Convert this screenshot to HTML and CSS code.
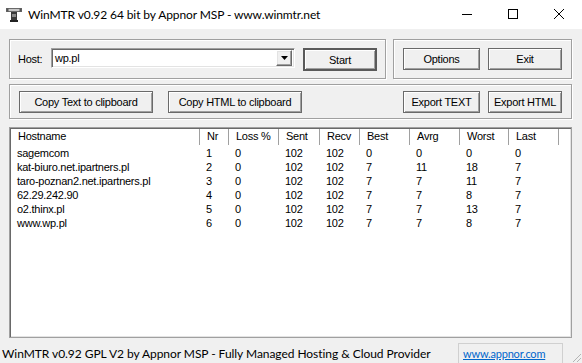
FILE: index.html
```html
<!DOCTYPE html>
<html lang="en">
<head>
    <meta charset="UTF-8">
    <title>WinMTR v0.92 64 bit by Appnor MSP - www.winmtr.net</title>
    <link rel="stylesheet" href="styles.css">
</head>
<body>
    <div class="titlebar">
        <svg class="app-icon" width="16" height="16" viewBox="0 0 16 16">
            <rect x="0.5" y="1.5" width="15" height="3" fill="#c8c8c8" stroke="#6a6a6a"/>
            <rect x="0.5" y="1.5" width="2" height="3" fill="#555"/>
            <rect x="13.5" y="1.5" width="2" height="3" fill="#555"/>
            <rect x="5" y="5" width="6" height="10" fill="#3a3a3a"/>
            <rect x="6" y="7" width="4" height="3" fill="#8a8a8a"/>
            <rect x="4" y="13" width="8" height="2" fill="#222"/>
        </svg>
        <span class="title">WinMTR v0.92 64 bit by Appnor MSP - www.winmtr.net</span>
        <div class="controls">
            <div class="ctrl">
                <svg width="12" height="12" viewBox="0 0 12 12"><line x1="1" y1="6.5" x2="11" y2="6.5" stroke="#000" stroke-width="1"/></svg>
            </div>
            <div class="ctrl">
                <svg width="12" height="12" viewBox="0 0 12 12"><rect x="1.5" y="1.5" width="9" height="9" fill="none" stroke="#000" stroke-width="1"/></svg>
            </div>
            <div class="ctrl">
                <svg width="12" height="12" viewBox="0 0 12 12"><path d="M1 1 L11 11 M11 1 L1 11" stroke="#000" stroke-width="1"/></svg>
            </div>
        </div>
    </div>

    <div class="client">
        <div class="top-row">
            <div class="group host-group">
                <label class="host-label">Host:</label>
                <div class="combo">
                    <span class="combo-value">wp.pl</span>
                    <span class="combo-btn">
                        <svg width="7" height="4" viewBox="0 0 7 4"><path d="M0 0 H7 L3.5 4 Z" fill="#000"/></svg>
                    </span>
                </div>
                <button class="btn btn-default btn-start">Start</button>
            </div>
            <div class="group action-group">
                <button class="btn btn-options">Options</button>
                <button class="btn btn-exit">Exit</button>
            </div>
        </div>

        <div class="group copy-group">
            <button class="btn btn-copy">Copy Text to clipboard</button>
            <button class="btn btn-copy">Copy HTML to clipboard</button>
            <button class="btn btn-options btn-export-text">Export TEXT</button>
            <button class="btn btn-exit">Export HTML</button>
        </div>

        <div class="listview">
            <div class="lv-row lv-header">
                <div>Hostname</div><div>Nr</div><div>Loss %</div><div>Sent</div><div>Recv</div>
                <div>Best</div><div>Avrg</div><div>Worst</div><div>Last</div><div></div>
            </div>
            <div class="lv-body" id="hops"></div>
        </div>
    </div>

    <div class="statusbar">
        <div class="status-text">WinMTR v0.92 GPL V2 by Appnor MSP - Fully Managed Hosting &amp; Cloud Provider</div>
        <div class="status-panel"><a class="status-link" href="#">www.appnor.com</a></div>
        <svg class="grip" width="12" height="12" viewBox="0 0 12 12">
            <path d="M11 3 L3 11 M11 7 L7 11 M11 11 L11 11" stroke="#b4b4b4" stroke-width="1"/>
        </svg>
    </div>

    <script>
        // hop rows: host, nr, loss, sent, recv, best, avrg, worst, last
        const hops = [
            ['sagemcom', 1, 0, 102, 102, 0, 0, 0, 0],
            ['kat-biuro.net.ipartners.pl', 2, 0, 102, 102, 7, 11, 18, 7],
            ['taro-poznan2.net.ipartners.pl', 3, 0, 102, 102, 7, 7, 11, 7],
            ['62.29.242.90', 4, 0, 102, 102, 7, 7, 8, 7],
            ['o2.thinx.pl', 5, 0, 102, 102, 7, 7, 13, 7],
            ['www.wp.pl', 6, 0, 102, 102, 7, 7, 8, 7]
        ];

        const body = document.getElementById('hops');
        hops.forEach(hop => {
            const row = document.createElement('div');
            row.className = 'lv-row';
            hop.forEach(value => {
                const cell = document.createElement('div');
                cell.textContent = value;
                row.appendChild(cell);
            });
            row.appendChild(document.createElement('div'));
            body.appendChild(row);
        });
    </script>
</body>
</html>
```

FILE: styles.css
```css
* {
    margin: 0;
    padding: 0;
    box-sizing: border-box;
}

body {
    width: 582px;
    height: 363px;
    overflow: hidden;
    background: #f0f0f0;
    font-family: "Liberation Sans", Arial, sans-serif;
    font-size: 11px;
    letter-spacing: -0.25px;
    color: #000;
}

/* title bar */
.titlebar {
    height: 29px;
    background: #fff;
    display: flex;
    align-items: center;
}

.app-icon {
    margin-left: 6px;
    margin-top: 1px;
}

.title {
    margin-left: 6px;
    font-family: Lato, "Open Sans", sans-serif;
    font-size: 12px;
    letter-spacing: -0.1px;
}

.controls {
    margin-left: auto;
    display: flex;
    align-self: flex-start;
}

.ctrl {
    width: 46px;
    height: 27px;
    display: flex;
    align-items: center;
    justify-content: center;
}

/* client area */
.client {
    padding: 10px 9px 0 9px;
}

.top-row {
    display: flex;
    gap: 7px;
}

.group {
    border: 1px solid #a0a0a0;
    box-shadow: inset 1px 1px 0 #fff, 1px 1px 0 #fff;
    display: flex;
    align-items: flex-start;
}

.host-group {
    width: 377px;
    height: 40px;
    padding: 8px 0 0 8px;
}

.host-label {
    width: 33px;
    line-height: 20px;
    padding-top: 1px;
}

.combo {
    width: 244px;
    height: 20px;
    background: #fff;
    border: 1px solid;
    border-color: #a0a0a0 #fff #fff #a0a0a0;
    box-shadow: inset 1px 1px 0 #696969, inset -1px -1px 0 #e3e3e3;
    display: flex;
    align-items: center;
    padding: 0 2px 0 3px;
}

.combo-value {
    flex: 1;
}

.combo-btn {
    width: 16px;
    height: 16px;
    background: #f0f0f0;
    border: 1px solid;
    border-color: #fff #696969 #696969 #fff;
    box-shadow: inset -1px -1px 0 #a0a0a0, inset 1px 1px 0 #e3e3e3;
    display: flex;
    align-items: center;
    justify-content: center;
}

.btn {
    height: 22px;
    background: #f0f0f0;
    border: 1px solid #6a6a6a;
    box-shadow: inset 1px 1px 0 #fff, inset -1px -1px 0 #a0a0a0;
    font-family: inherit;
    font-size: 11px;
    letter-spacing: -0.25px;
    color: #000;
    padding: 0;
}

.btn-default {
    border: 2px solid #5a5a5a;
    box-shadow: inset 1px 1px 0 #fff, inset -1px -1px 0 #a0a0a0;
}

.btn-start {
    width: 74px;
    height: 23px;
    margin-left: 8px;
}

.action-group {
    width: 179px;
    height: 40px;
    padding: 8px 0 0 9px;
    gap: 8px;
}

.btn-options {
    width: 77px;
}

.btn-exit {
    width: 74px;
}

.copy-group {
    margin-top: 5px;
    width: 563px;
    height: 35px;
    padding: 6px 9px 0 9px;
    gap: 8px;
}

.btn-copy {
    width: 134px;
}

.btn-copy + .btn-copy {
    margin-left: 7px;
}

.btn-export-text {
    margin-left: auto;
}

/* hop list */
.listview {
    margin-top: 8px;
    width: 563px;
    height: 211px;
    background: #fff;
    border: 1px solid #a0a0a0;
    padding: 1px;
    box-shadow: inset 1px 1px 0 #696969, inset -1px -1px 0 #e3e3e3;
}

.lv-row {
    display: grid;
    grid-template-columns: 189px 29px 50px 41px 40px 50px 50px 49px 50px 1fr;
    height: 14px;
    line-height: 14px;
}

.lv-row > div {
    padding-left: 6px;
    white-space: nowrap;
}

.lv-header {
    height: 16px;
    line-height: 15px;
}

.lv-header > div {
    border-right: 1px solid #a0a0a0;
    padding-left: 7px;
}

.lv-header > div:last-child {
    border-right: none;
}

.lv-body {
    padding-top: 1px;
}

/* status bar */
.statusbar {
    margin-top: 5px;
    height: 20px;
    display: flex;
    align-items: stretch;
    font-family: Lato, "Open Sans", sans-serif;
    font-size: 12px;
    letter-spacing: -0.05px;
}

.status-text {
    width: 458px;
    padding-left: 2px;
    line-height: 21px;
}

.status-panel {
    width: 105px;
    border: 1px solid #d0d0d0;
    border-bottom: none;
    padding-left: 4px;
    line-height: 19px;
}

.status-link {
    color: #0066cc;
    text-decoration: underline;
    font-size: 11px;
    letter-spacing: -0.2px;
}

.grip {
    margin-left: auto;
    align-self: flex-end;
}
```
